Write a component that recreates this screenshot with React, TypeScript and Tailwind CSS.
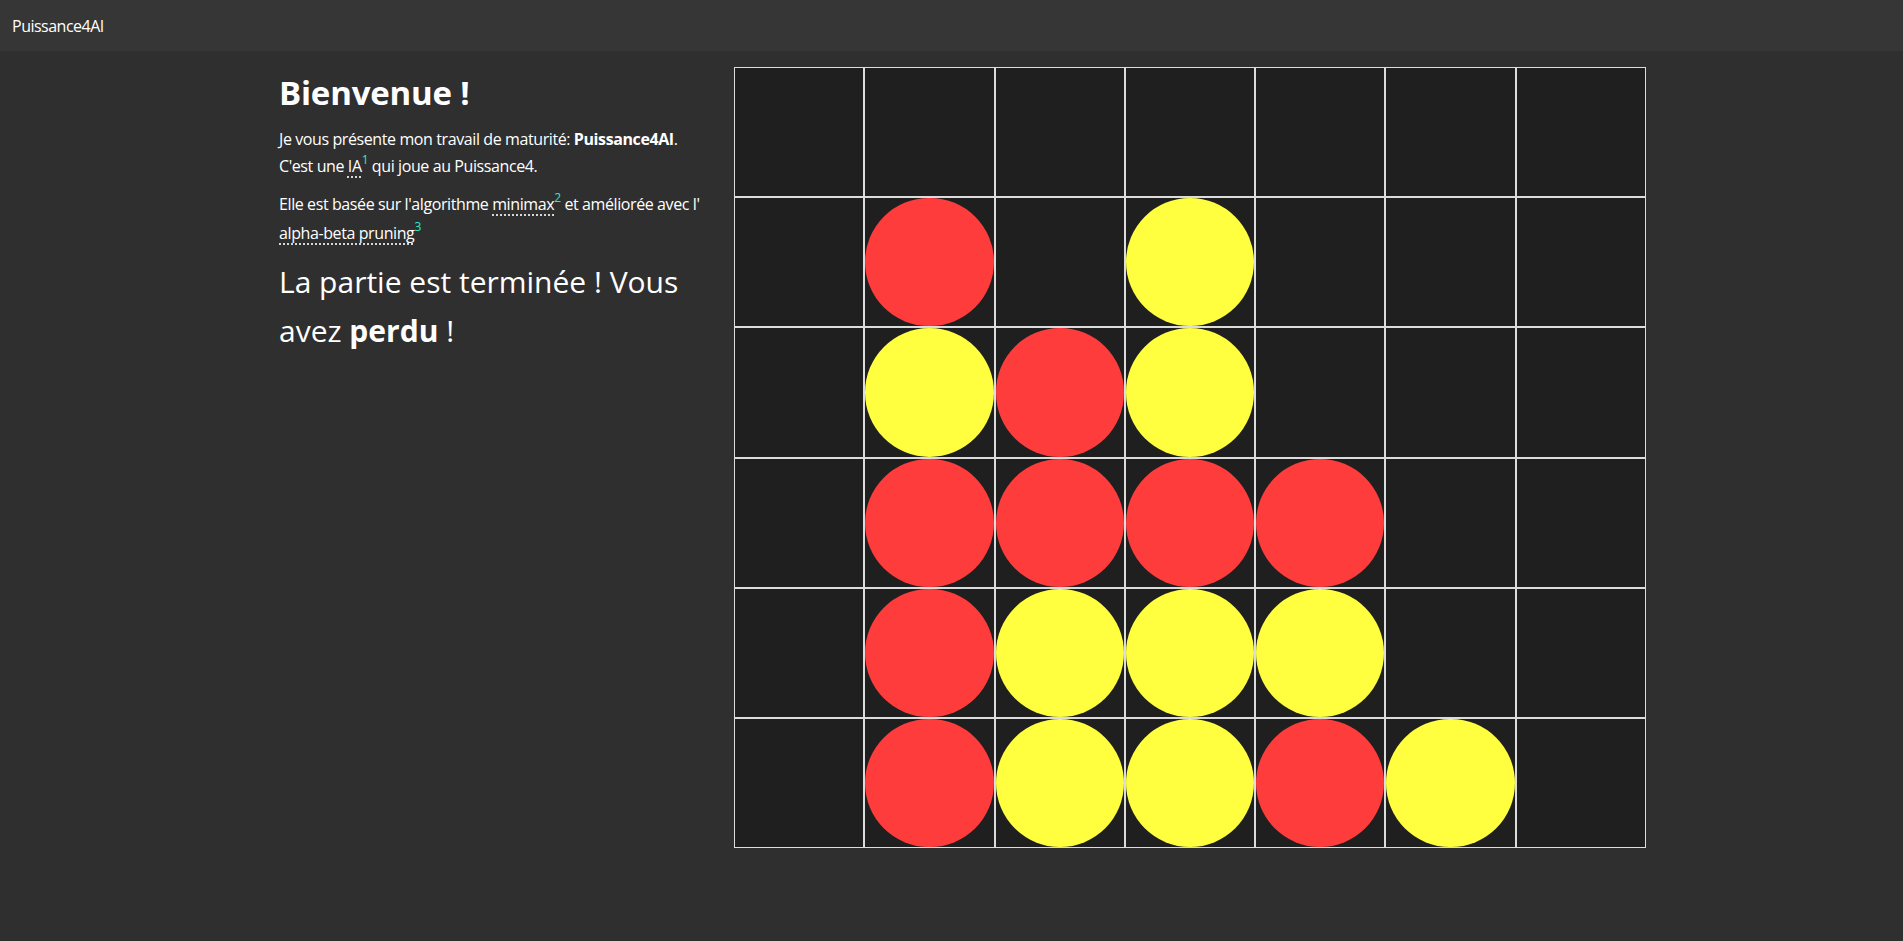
const board: string[] = [
  '.......',
  '.R.Y...',
  '.YRY...',
  '.RRRR..',
  '.RYYY..',
  '.RYYRY.',
]

function Cell({ v }: { v: string }) {
  return (
    <div className="border border-[#dcdcdc] bg-[#1f1f1f] flex">
      {v === 'R' && <div className="flex-1 rounded-full bg-[#ff3c3c]" />}
      {v === 'Y' && <div className="flex-1 rounded-full bg-[#ffff40]" />}
    </div>
  )
}

function Note({ n }: { n: number }) {
  return <sup className="text-[12px] text-[#33e6cc] -top-[0.6em]">{n}</sup>
}

export default function App() {
  return (
    <div className="min-h-[941px] bg-[#2f2f2f] text-white font-['Open_Sans',sans-serif]">
      {/* Navbar */}
      <header className="h-[51px] bg-[#363636] flex items-center px-3">
        <span className="text-[16px] tracking-[-0.5px]">Puissance4AI</span>
      </header>

      <main className="flex pl-[279px] pt-4">
        {/* Intro */}
        <div className="w-[455px] pt-[6px]">
          <h1 className="text-[33px] font-bold leading-[1.2] tracking-[-0.2px]">Bienvenue !</h1>
          <p className="mt-[13px] text-[16px] leading-[27px] tracking-[-0.4px]">
            Je vous présente mon travail de maturité: <b>Puissance4AI</b>.
            <br />
            C'est une <abbr className="underline decoration-dotted underline-offset-[5px]">IA</abbr>
            <Note n={1} /> qui joue au Puissance4.
          </p>
          <p className="mt-[10px] text-[16px] leading-[29px] tracking-[-0.4px]">
            Elle est basée sur l'algorithme{' '}
            <abbr className="underline decoration-dotted underline-offset-[5px]">minimax</abbr>
            <Note n={2} /> et améliorée avec l'{' '}
            <abbr className="underline decoration-dotted underline-offset-[5px]">alpha-beta pruning</abbr>
            <Note n={3} />
          </p>
          <p className="mt-[9px] text-[30px] leading-[49px]">
            La partie est terminée ! Vous avez <b>perdu</b> !
          </p>
        </div>

        {/* Board */}
        <div className="grid grid-cols-7 grid-rows-6 w-[912px] h-[781px]">
          {board.flatMap((row, r) =>
            row.split('').map((v, c) => <Cell key={`${r}-${c}`} v={v} />)
          )}
        </div>
      </main>
    </div>
  )
}
